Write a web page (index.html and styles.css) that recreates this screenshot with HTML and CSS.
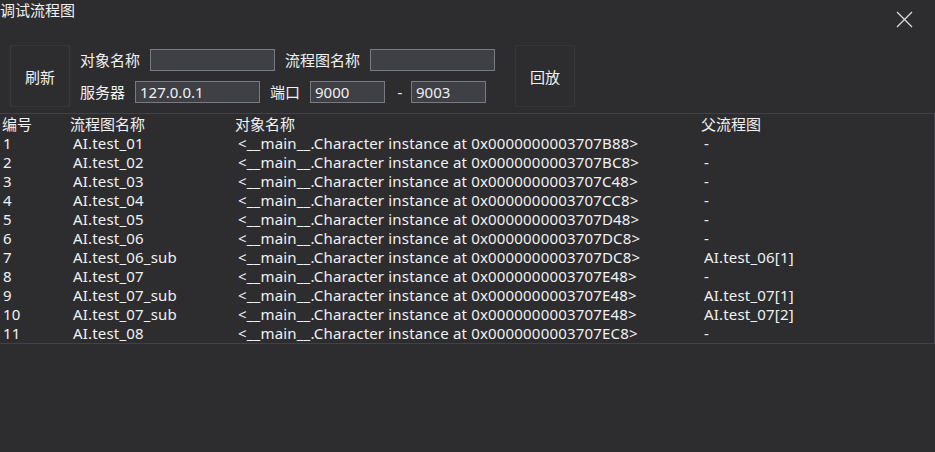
FILE: index.html
```html
<!DOCTYPE html>
<html lang="zh">
<head>
<meta charset="utf-8">
<title>调试流程图</title>
<link rel="stylesheet" href="styles.css">
</head>
<body>
<div class="window">
  <div class="titlebar">
    <div class="title">调试流程图</div>
    <div class="close">
      <svg width="17" height="17" viewBox="0 0 17 17"><path d="M1 1 L16 16 M16 1 L1 16" stroke="#dcdcdc" stroke-width="1.3" fill="none"/></svg>
    </div>
  </div>
  <div class="toolbar">
    <div class="btn">刷新</div>
    <div class="form">
      <div class="frow">
        <span class="lbl">对象名称</span>
        <span class="inp w125"></span>
        <span class="lbl">流程图名称</span>
        <span class="inp w125"></span>
      </div>
      <div class="frow">
        <span class="lbl">服务器</span>
        <span class="inp w125">127.0.0.1</span>
        <span class="lbl">端口</span>
        <span class="inp w75">9000</span>
        <span class="dash">-</span>
        <span class="inp w75">9003</span>
      </div>
    </div>
    <div class="btn">回放</div>
  </div>
  <div class="table">
    <div class="tr th"><span>编号</span><span>流程图名称</span><span>对象名称</span><span>父流程图</span></div>
    <div class="tr"><span>1</span><span>AI.test_01</span><span>&lt;__main__.Character instance at 0x0000000003707B88&gt;</span><span>-</span></div>
    <div class="tr"><span>2</span><span>AI.test_02</span><span>&lt;__main__.Character instance at 0x0000000003707BC8&gt;</span><span>-</span></div>
    <div class="tr"><span>3</span><span>AI.test_03</span><span>&lt;__main__.Character instance at 0x0000000003707C48&gt;</span><span>-</span></div>
    <div class="tr"><span>4</span><span>AI.test_04</span><span>&lt;__main__.Character instance at 0x0000000003707CC8&gt;</span><span>-</span></div>
    <div class="tr"><span>5</span><span>AI.test_05</span><span>&lt;__main__.Character instance at 0x0000000003707D48&gt;</span><span>-</span></div>
    <div class="tr"><span>6</span><span>AI.test_06</span><span>&lt;__main__.Character instance at 0x0000000003707DC8&gt;</span><span>-</span></div>
    <div class="tr"><span>7</span><span>AI.test_06_sub</span><span>&lt;__main__.Character instance at 0x0000000003707DC8&gt;</span><span>AI.test_06[1]</span></div>
    <div class="tr"><span>8</span><span>AI.test_07</span><span>&lt;__main__.Character instance at 0x0000000003707E48&gt;</span><span>-</span></div>
    <div class="tr"><span>9</span><span>AI.test_07_sub</span><span>&lt;__main__.Character instance at 0x0000000003707E48&gt;</span><span>AI.test_07[1]</span></div>
    <div class="tr"><span>10</span><span>AI.test_07_sub</span><span>&lt;__main__.Character instance at 0x0000000003707E48&gt;</span><span>AI.test_07[2]</span></div>
    <div class="tr"><span>11</span><span>AI.test_08</span><span>&lt;__main__.Character instance at 0x0000000003707EC8&gt;</span><span>-</span></div>
  </div>
</div>
</body>
</html>
```
FILE: styles.css
```css
html, body {
  margin: 0;
  padding: 0;
  background: #2d2d30;
}
body {
  font-family: "Noto Sans", "Noto Sans CJK SC", sans-serif;
  font-size: 15px;
  color: #f1f1f1;
}
.window {
  width: 935px;
  height: 452px;
  overflow: hidden;
}
.titlebar {
  display: flex;
  justify-content: space-between;
  align-items: flex-start;
  height: 45px;
}
.title {
  line-height: 20px;
}
.close {
  margin-top: 11px;
  margin-right: 22px;
  width: 17px;
  height: 17px;
}
.close svg { display: block; }
.toolbar {
  display: flex;
  align-items: center;
  padding-left: 10px;
  height: 62px;
}
.btn {
  width: 60px;
  height: 62px;
  box-sizing: border-box;
  border: 1px solid #37373a;
  display: flex;
  align-items: center;
  justify-content: center;
}
.form {
  display: flex;
  flex-direction: column;
  gap: 10px;
  padding: 0 20px 0 10px;
}
.frow {
  display: flex;
  align-items: center;
  gap: 10px;
  height: 22px;
}
.lbl {
  line-height: 22px;
}
.inp {
  box-sizing: border-box;
  height: 22px;
  background: #3f3f46;
  border: 1px solid #7a7a80;
  padding: 0 4px;
  line-height: 20px;
}
.w125 { width: 125px; }
.w75 { width: 75px; }
.dash { width: 16px; text-align: center; margin: 0 -7px 0 -3px; }
.table {
  margin-top: 6px;
  border-top: 1px solid #424246;
  border-bottom: 1px solid #424246;
  border-right: 1px solid #424246;
  padding-top: 1px;
  box-sizing: border-box;
  width: 935px;
}
.tr {
  display: grid;
  grid-template-columns: 70px 165px 466px 1fr;
  height: 19px;
  line-height: 19px;
  white-space: nowrap;
  letter-spacing: 0.18px;
}
.tr span { padding-left: 3px; }
.th { letter-spacing: 0; }
.th span { padding-left: 0; }
.th span:first-child { padding-left: 2px; }
```
